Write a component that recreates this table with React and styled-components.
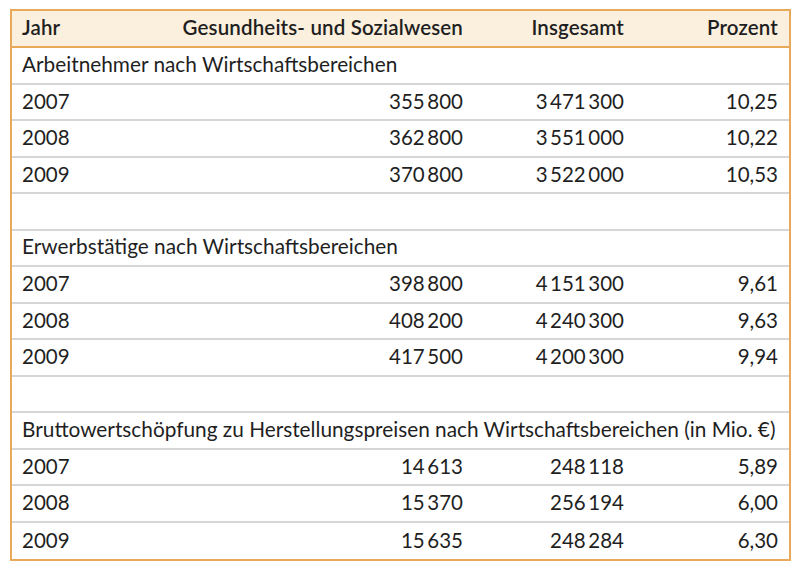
import React from 'react';
import styled, { createGlobalStyle } from 'styled-components';

const GlobalStyle = createGlobalStyle`
  html, body {
    margin: 0;
    padding: 0;
    background: #fff;
  }
  body {
    font-family: Lato, "Noto Sans", sans-serif;
    color: #1f1f1f;
  }
`;

const Page = styled.div`
  width: 800px;
  height: 569px;
  padding: 9px 0 0 10px;
  box-sizing: border-box;
`;

const Table = styled.div`
  width: 781px;
  border: 2px solid #e9a95a;
  box-sizing: border-box;
`;

const Row = styled.div`
  display: grid;
  grid-template-columns: 160px 302px 161px 1fr;
  height: ${({ head }) => (head ? '37px' : '36.5px')};
  box-sizing: border-box;
  align-items: center;
  background: ${({ head }) => (head ? '#fbefde' : '#fff')};
  border-bottom: 2px solid ${({ head }) => (head ? '#e9a95a' : '#d6d6d6')};
  &:last-child {
    border-bottom: none;
  }
`;

const Cell = styled.div`
  font-size: ${({ span }) => (span ? '20.8px' : '20.5px')};
  font-weight: ${({ head }) => (head ? 600 : 400)};
  letter-spacing: ${({ head }) => (head ? '0.15px' : '0')};
  text-align: ${({ right }) => (right ? 'right' : 'left')};
  padding: ${({ right }) => (right ? '0 11px 0 0' : '0 0 0 10px')};
  white-space: nowrap;
  grid-column: ${({ span }) => (span ? '1 / -1' : 'auto')};
  line-height: 1;
  padding-bottom: 2px;
`;

const sections = [
  {
    title: 'Arbeitnehmer nach Wirtschaftsbereichen',
    rows: [
      ['2007', '355\u2009800', '3\u2009471\u2009300', '10,25'],
      ['2008', '362\u2009800', '3\u2009551\u2009000', '10,22'],
      ['2009', '370\u2009800', '3\u2009522\u2009000', '10,53'],
    ],
  },
  {
    title: 'Erwerbstätige nach Wirtschaftsbereichen',
    rows: [
      ['2007', '398\u2009800', '4\u2009151\u2009300', '9,61'],
      ['2008', '408\u2009200', '4\u2009240\u2009300', '9,63'],
      ['2009', '417\u2009500', '4\u2009200\u2009300', '9,94'],
    ],
  },
  {
    title: 'Bruttowertschöpfung zu Herstellungspreisen nach Wirtschaftsbereichen (in Mio. €)',
    rows: [
      ['2007', '14\u2009613', '248\u2009118', '5,89'],
      ['2008', '15\u2009370', '256\u2009194', '6,00'],
      ['2009', '15\u2009635', '248\u2009284', '6,30'],
    ],
  },
];

export default function App() {
  return (
    <Page>
      <GlobalStyle />
      <Table>
        <Row head>
          <Cell head>Jahr</Cell>
          <Cell head right>Gesundheits- und Sozialwesen</Cell>
          <Cell head right>Insgesamt</Cell>
          <Cell head right>Prozent</Cell>
        </Row>
        {sections.map((s, i) => (
          <React.Fragment key={s.title}>
            {i > 0 && (
              <Row>
                <Cell span>&nbsp;</Cell>
              </Row>
            )}
            <Row>
              <Cell span>{s.title}</Cell>
            </Row>
            {s.rows.map((r) => (
              <Row key={r[0]}>
                <Cell>{r[0]}</Cell>
                <Cell right>{r[1]}</Cell>
                <Cell right>{r[2]}</Cell>
                <Cell right>{r[3]}</Cell>
              </Row>
            ))}
          </React.Fragment>
        ))}
      </Table>
    </Page>
  );
}
